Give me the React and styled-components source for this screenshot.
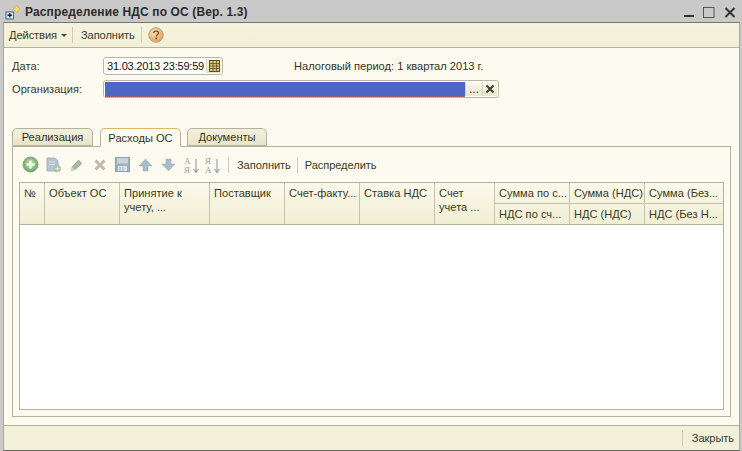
import React from 'react';
import styled, { createGlobalStyle } from 'styled-components';

const Global = createGlobalStyle`
  html, body { margin: 0; padding: 0; background: #fff; }
  body { font-family: "Liberation Sans", Arial, sans-serif; font-size: 11.1px; color: #33331a; }
`;

const Win = styled.div`
  width: 742px;
  height: 451px;
  display: flex;
  flex-direction: column;
  box-sizing: border-box;
  background: #c9c9c9;
  padding: 0 2px 0 3px;
  overflow: hidden;
`;

const TitleBar = styled.div`
  height: 22px;
  box-sizing: border-box;
  margin: 0 -2px 0 -3px;
  padding: 2px 6px 0 4px;
  display: flex;
  align-items: center;
  flex: none;
`;

const TitleText = styled.span`
  font-weight: bold;
  font-size: 12px;
  letter-spacing: 0.14px;
  color: #2b2b2b;
  margin-left: 5px;
  flex: 1;
`;

const WinButtons = styled.div`
  display: flex;
  align-items: center;
  gap: 9px;
`;

const Body = styled.div`
  flex: 1;
  display: flex;
  flex-direction: column;
  min-height: 0;
  border-top: 1px solid #77776a;
  border-left: 1px solid #a9a99a;
  border-right: 1px solid #a9a99a;
  border-bottom: 1px solid #66665c;
  background: #fdfbf0;
`;

const TopBar = styled.div`
  height: 24px;
  flex: none;
  display: flex;
  align-items: center;
  padding-left: 5px;
  background: linear-gradient(#f5f3de, #f3f0da);
  border-bottom: 1px solid #b4b29c;
`;

const BarText = styled.span`
  color: #3a3a1c;
  letter-spacing: -0.08px;
`;

const Arrow = styled.span`
  width: 0;
  height: 0;
  margin: 1px 0 0 4px;
  border-left: 3px solid transparent;
  border-right: 3px solid transparent;
  border-top: 3px solid #444;
`;

const Divider = styled.span`
  width: 1px;
  height: 16px;
  background: #cfccb4;
  margin: ${p => p.$m};
`;

const Content = styled.div`
  flex: 1;
  min-height: 0;
  display: flex;
  flex-direction: column;
  padding: 9px 8px 8px 8px;
`;

const FormRow = styled.div`
  display: flex;
  align-items: center;
  height: 18px;
  margin-bottom: ${p => p.$mb || 5}px;
`;

const Label = styled.span`
  width: 91px;
  color: #3a3a1c;
`;

const Field = styled.div`
  height: 18px;
  width: ${p => p.$w}px;
  box-sizing: border-box;
  border: 1px solid #b9b7a2;
  border-radius: 3px;
  background: #fff;
  display: flex;
  align-items: center;
  padding: 1px;
`;

const DateText = styled.span`
  flex: 1;
  padding-left: 2px;
  color: #111;
  letter-spacing: -0.25px;
  white-space: nowrap;
`;

const FieldBtn = styled.span`
  width: ${p => p.$w || 14}px;
  height: 14px;
  flex: none;
  display: flex;
  align-items: center;
  justify-content: center;
  background: linear-gradient(#fbf9ea, #e9e6cc);
  border-left: 1px solid #d8d5bf;
  color: #444;
  font-size: 12px;
  line-height: 12px;
`;

const BlueFill = styled.div`
  flex: 1;
  height: 15px;
  box-sizing: border-box;
  background: #4f67c4;
  border-bottom: 1px dotted #b0606a;
`;

const Period = styled.span`
  margin-left: 71px;
  color: #33331a;
  white-space: nowrap;
`;

const Tabs = styled.div`
  display: flex;
  align-items: flex-start;
  height: 18px;
  margin-top: 29px;
  position: relative;
  z-index: 1;
  flex: none;
`;

const Tab = styled.div`
  height: ${p => p.$active ? 19 : 18}px;
  width: ${p => p.$w}px;
  margin-left: ${p => p.$ml || 0}px;
  box-sizing: border-box;
  border: 1px solid #b4b29c;
  border-bottom: ${p => p.$active ? '1px solid #fdfbf0' : '1px solid #b4b29c'};
  border-top-color: ${p => p.$active ? '#d9b66a' : '#b4b29c'};
  border-radius: 5px 5px 0 0;
  background: ${p => p.$active ? '#fdfbf0' : 'linear-gradient(#f3f0dc, #e9e5cb)'};
  display: flex;
  align-items: center;
  justify-content: center;
  color: #33331a;
`;

const Panel = styled.div`
  flex: 1;
  min-height: 0;
  display: flex;
  flex-direction: column;
  box-sizing: border-box;
  border: 1px solid #b4b29c;
  padding: 0 6px 6px 6px;
  width: 719px;
  background: #fdfbf0;
`;

const GridBar = styled.div`
  height: 35px;
  display: flex;
  align-items: center;
  flex: none;
`;

const IconSlot = styled.span`
  width: ${p => p.$w || 23}px;
  height: 18px;
  display: flex;
  align-items: center;
  justify-content: center;
  flex: none;
`;

const GridBox = styled.div`
  flex: 1;
  min-height: 0;
  border: 1px solid #b4b29c;
  background: #fff;
`;

const Head = styled.div`
  display: grid;
  grid-template-columns: 25px 75px 90px 75px 75px 75px 60px 75px 75px 1fr;
  height: 41px;
  border-bottom: 1px solid #b4b29c;
  background: linear-gradient(#fbf9ea, #f1eed6);
`;

const HeadCell = styled.div`
  box-sizing: border-box;
  padding: 3px 0 0 4px;
  line-height: 14px;
  border-right: 1px solid #c4c2ac;
  color: #3a3a1c;
  white-space: pre;
  overflow: hidden;
`;

const SplitCell = styled.div`
  display: grid;
  grid-template-rows: 21px 20px;
  box-sizing: border-box;
  border-right: ${p => p.$last ? 'none' : '1px solid #c4c2ac'};
`;

const SplitPart = styled.div`
  box-sizing: border-box;
  padding: 4px 0 0 4px;
  line-height: 13px;
  color: #3a3a1c;
  white-space: nowrap;
  overflow: hidden;
  border-bottom: ${p => p.$low ? 'none' : '1px solid #c4c2ac'};
`;

const StatusBar = styled.div`
  height: 24px;
  flex: none;
  display: flex;
  align-items: center;
  justify-content: flex-end;
  background: #f3f0da;
  border-top: 1px solid #b4b29c;
  padding-right: 5px;
`;

const AppIcon = () => (
  <svg width="16" height="16" viewBox="0 0 16 16">
    <rect x="2" y="8" width="7.500" height="7" fill="#dfeaf5" stroke="#45658a" />
    <path d="M5.750 9v4.500M3.500 11.250h4.500" stroke="#123" strokeWidth="1.400" />
    <path d="M12.500 1.500l3.500 3.500-3.500 3.500L9 5z" fill="#f3d560" stroke="#c9a93a" strokeWidth="0.600" />
  </svg>
);

const MinIcon = () => (
  <svg width="10" height="14" viewBox="0 0 10 14"><rect x="0" y="10" width="10" height="2" fill="#333" /></svg>
);
const MaxIcon = () => (
  <svg width="12" height="14" viewBox="0 0 12 14"><rect x="0.500" y="2.500" width="10.500" height="10" fill="none" stroke="#555" /></svg>
);
const CloseIcon = () => (
  <svg width="12" height="14" viewBox="0 0 12 14"><path d="M1.500 3l9 9M10.500 3l-9 9" stroke="#333" strokeWidth="2" /></svg>
);

const HelpIcon = () => (
  <svg width="16" height="16" viewBox="0 0 16 16">
    <defs>
      <radialGradient id="hb" cx="40%" cy="35%" r="70%">
        <stop offset="0" stopColor="#fbe3b8" />
        <stop offset="1" stopColor="#e09a50" />
      </radialGradient>
    </defs>
    <circle cx="8" cy="8" r="7.300" fill="url(#hb)" stroke="#b5a890" />
    <path d="M5.700 6.200c0-2.800 4.800-2.800 4.800 0 0 1.600-2.300 1.600-2.300 3.200" fill="none" stroke="#7a4a20" strokeWidth="1.300" />
    <rect x="7.400" y="10.500" width="1.600" height="1.700" fill="#7a4a20" />
  </svg>
);

const CalendarIcon = () => (
  <svg width="11" height="12" viewBox="0 0 11 12">
    <rect x="0.500" y="0.500" width="10" height="11" fill="#d9c67a" stroke="#5f5222" />
    <path d="M0.500 3.500h10M0.500 6h10M0.500 8.500h10M4 1v10M7.500 1v10" stroke="#5f5222" strokeWidth="0.800" />
  </svg>
);

const ClearIcon = () => (
  <svg width="10" height="10" viewBox="0 0 10 10"><path d="M1.500 1.500l7 7M8.500 1.500l-7 7" stroke="#3f3f30" strokeWidth="2" /></svg>
);

const AddIcon = () => (
  <svg width="17" height="17" viewBox="0 0 17 17">
    <defs>
      <radialGradient id="ag" cx="50%" cy="45%" r="55%">
        <stop offset="0" stopColor="#d5eec2" />
        <stop offset="1" stopColor="#67a05c" />
      </radialGradient>
    </defs>
    <circle cx="8.500" cy="8.500" r="7.500" fill="url(#ag)" stroke="#83a27f" />
    <path d="M8.500 4.500v8M4.500 8.500h8" stroke="#f4fbef" strokeWidth="2.400" />
  </svg>
);

const CopyIcon = () => (
  <svg width="17" height="16" viewBox="0 0 17 16">
    <path d="M2 1h8l3 3v10H2z" fill="#b5c3cf" stroke="#a4b3c0" />
    <path d="M4 5h6M4 7.500h6" stroke="#d8e0e6" />
    <circle cx="12.500" cy="11.500" r="3.500" fill="#a9c4a2" />
    <path d="M12.500 9.500v4M10.500 11.500h4" stroke="#e7efe4" />
  </svg>
);

const PencilIcon = () => (
  <svg width="14" height="14" viewBox="0 0 14 14">
    <path d="M1.500 12.500l1-4 6-6.500 3.500 3.500-6.500 6z" fill="#a9b8a0" stroke="#98a890" strokeWidth="0.600" />
    <path d="M1.500 12.500l1-3 2 2z" fill="#d8d0b8" />
  </svg>
);

const CrossIcon = () => (
  <svg width="14" height="14" viewBox="0 0 14 14"><path d="M2.500 2.500l9 9M11.500 2.500l-9 9" stroke="#c4b9a8" strokeWidth="3" /></svg>
);

const SaveIcon = () => (
  <svg width="15" height="15" viewBox="0 0 15 15">
    <rect x="0.500" y="0.500" width="14" height="14" fill="#9fb0c0" stroke="#8da0b2" />
    <rect x="2" y="1" width="11" height="5.500" fill="#c8d3dc" />
    <rect x="3" y="9" width="9" height="5" fill="#dde3e8" />
    <path d="M5 10v4M8 10v4" stroke="#9fb0c0" />
  </svg>
);

const ArrowIcon = ({ down }) => (
  <svg width="15" height="14" viewBox="0 0 15 14">
    <path
      d={down ? 'M5 1h5v5h4l-6.500 7L1 6h4z' : 'M5 13h5V8h4L7.500 1 1 8h4z'}
      fill="#a9bcc8"
      stroke="#9aaeba"
      strokeWidth="0.600"
    />
  </svg>
);

const SortIcon = ({ rev }) => (
  <svg width="18" height="18" viewBox="0 0 18 18">
    <text x="1" y="8" fontSize="9" fontFamily="Liberation Serif, serif" fill={rev ? '#c09090' : '#8c9cb0'}>{rev ? 'Я' : 'А'}</text>
    <text x="1" y="17" fontSize="9" fontFamily="Liberation Serif, serif" fill={rev ? '#8c9cb0' : '#c09090'}>{rev ? 'А' : 'Я'}</text>
    <path d="M13 3v13M10.500 13l2.500 3.500 2.500-3.500" fill="none" stroke="#9aa5a8" strokeWidth="1.200" />
  </svg>
);

const columns = [
  '№',
  'Объект ОС',
  'Принятие к\nучету, ...',
  'Поставщик',
  'Счет-факту...',
  'Ставка НДС',
  'Счет\nучета ...',
];

const splitColumns = [
  ['Сумма по с...', 'НДС по сч...'],
  ['Сумма (НДС)', 'НДС (НДС)'],
  ['Сумма (Без...', 'НДС (Без Н...'],
];

export default function App() {
  return (
    <>
      <Global />
      <Win>
        <TitleBar>
          <AppIcon />
          <TitleText>Распределение НДС по ОС (Вер. 1.3)</TitleText>
          <WinButtons>
            <MinIcon />
            <MaxIcon />
            <CloseIcon />
          </WinButtons>
        </TitleBar>
        <Body>
          <TopBar>
            <BarText>Действия</BarText>
            <Arrow />
            <Divider $m="0 8px 0 5px" />
            <BarText>Заполнить</BarText>
            <Divider $m="0 6px 0 6px" />
            <HelpIcon />
          </TopBar>
          <Content>
            <FormRow>
              <Label>Дата:</Label>
              <Field $w={120}>
                <DateText>31.03.2013 23:59:59</DateText>
                <FieldBtn><CalendarIcon /></FieldBtn>
              </Field>
              <Period>Налоговый период: 1 квартал 2013 г.</Period>
            </FormRow>
            <FormRow $mb={1}>
              <Label>Организация:</Label>
              <Field $w={396}>
                <BlueFill />
                <FieldBtn $w={16}>...</FieldBtn>
                <FieldBtn $w={14}><ClearIcon /></FieldBtn>
              </Field>
            </FormRow>
            <Tabs>
              <Tab $w={81}>Реализация</Tab>
              <Tab $w={81} $ml={7} $active>Расходы ОС</Tab>
              <Tab $w={80} $ml={6}>Документы</Tab>
            </Tabs>
            <Panel>
              <GridBar>
                <IconSlot><AddIcon /></IconSlot>
                <IconSlot><CopyIcon /></IconSlot>
                <IconSlot><PencilIcon /></IconSlot>
                <IconSlot><CrossIcon /></IconSlot>
                <IconSlot><SaveIcon /></IconSlot>
                <IconSlot><ArrowIcon /></IconSlot>
                <IconSlot><ArrowIcon down /></IconSlot>
                <IconSlot><SortIcon /></IconSlot>
                <IconSlot $w={20}><SortIcon rev /></IconSlot>
                <Divider $m="0 8px 0 5px" />
                <BarText>Заполнить</BarText>
                <Divider $m="0 7px 0 6px" />
                <BarText>Распределить</BarText>
              </GridBar>
              <GridBox>
                <Head>
                  {columns.map(c => <HeadCell key={c}>{c}</HeadCell>)}
                  {splitColumns.map(([top, low], i) => (
                    <SplitCell key={top} $last={i === 2}>
                      <SplitPart>{top}</SplitPart>
                      <SplitPart $low>{low}</SplitPart>
                    </SplitCell>
                  ))}
                </Head>
              </GridBox>
            </Panel>
          </Content>
          <StatusBar>
            <Divider $m="0 9px 0 0" />
            <BarText>Закрыть</BarText>
          </StatusBar>
        </Body>
      </Win>
    </>
  );
}
